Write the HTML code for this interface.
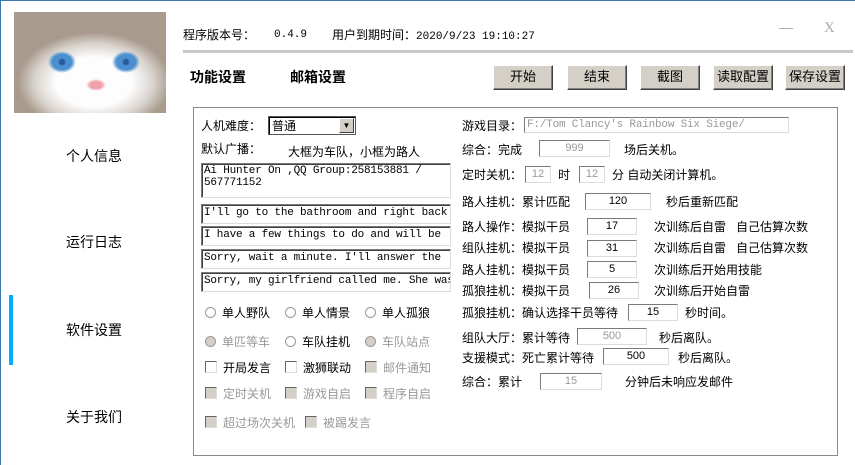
<!DOCTYPE html>
<html><head><meta charset="utf-8"><style>
*{margin:0;padding:0;box-sizing:border-box}
body{width:855px;height:465px;background:#fff;position:relative;overflow:hidden;font:12px "Liberation Sans","Noto Sans CJK SC","WenQuanYi Zen Hei",sans-serif;color:#000}
.a{position:absolute;white-space:nowrap;line-height:14px}
.tb{position:absolute;border:1px solid #dcdcdc;border-top-color:#7a7a7a;border-left-color:#7a7a7a;box-shadow:inset 1px 1px 0 #404040;background:#fff;font:11px "Liberation Mono","Noto Sans CJK SC",monospace;padding:1px 2px;white-space:nowrap;overflow:hidden;line-height:14px;letter-spacing:-0.2px}
.num{position:absolute;border:1px solid #dcdcdc;border-top-color:#7a7a7a;border-left-color:#7a7a7a;background:#fff;text-align:center;font-size:11px;line-height:14px;height:17px}
.dis{color:#999}
.btn{position:absolute;top:65px;height:25px;width:60px;background:#d4d0c8;border:1px solid #fff;border-right-color:#404040;border-bottom-color:#404040;box-shadow:inset -1px -1px 0 #808080;text-align:center;line-height:22px;font-size:13px}
.rad{display:inline-block;width:11px;height:11px;border-radius:50%;border:1px solid #999;vertical-align:-1px;margin-right:6px;background:#fff}
.chk{display:inline-block;width:12px;height:12px;border:1px solid #666;border-right-color:#ddd;border-bottom-color:#ddd;vertical-align:-1px;margin-right:6px;background:#fff}
.chk.d{background:#d4d0c8}
.rad.d{background:#d4d0c8}
.nav{position:absolute;left:66px;font-size:14px}
.m{font-family:"Liberation Mono",monospace;font-size:11px}
</style></head><body>
<div class="a" style="left:0;top:0;width:855px;height:1px;background:#3c78b4"></div>
<div class="a" style="left:0;top:0;width:1px;height:465px;background:#3c78b4"></div>
<div class="a" style="left:14px;top:12px;width:152px;height:101px;background:
radial-gradient(circle 4px at 48px 50px,#2a5a9a 0 60%,transparent),
radial-gradient(circle 4px at 112px 50px,#2a5a9a 0 60%,transparent),
radial-gradient(ellipse 14px 11px at 48px 50px,#4a8fd0 0 70%,transparent 100%),
radial-gradient(ellipse 14px 11px at 112px 50px,#4a8fd0 0 70%,transparent 100%),
radial-gradient(ellipse 10px 6px at 82px 73px,#f0a0a8 0 60%,transparent),
radial-gradient(ellipse 85px 55px at 80px 70px,#fdfdfd 45%,#d8d2cc 70%,#a89a8c 90%),
linear-gradient(#6b6660,#b0a8a0);"></div>
<div class="nav" style="top:146px">个人信息</div>
<div class="nav" style="top:232px">运行日志</div>
<div class="a" style="left:9px;top:295px;width:4px;height:70px;background:#00b0ff"></div>
<div class="nav" style="top:320px">软件设置</div>
<div class="nav" style="top:407px">关于我们</div>
<div class="a" style="left:183px;top:28px">程序版本号：</div>
<div class="a m" style="left:274px;top:28px">0.4.9</div>
<div class="a" style="left:332px;top:28px">用户到期时间：<span class="m">2020/9/23 19:10:27</span></div>
<div class="a" style="left:779px;top:20px;color:#aaa;font-size:14px">—</div>
<div class="a" style="left:824px;top:20px;color:#aaa;font:15px 'Liberation Serif',serif">X</div>
<div class="a" style="left:183px;top:50px;width:670px;height:3px;background:#c8c8c8"></div>
<div class="a" style="left:190px;top:70px;font-size:14px;font-weight:bold">功能设置</div>
<div class="a" style="left:290px;top:70px;font-size:14px;font-weight:bold">邮箱设置</div>
<div class="btn" style="left:493px">开始</div>
<div class="btn" style="left:567px">结束</div>
<div class="btn" style="left:640px">截图</div>
<div class="btn" style="left:713px">读取配置</div>
<div class="btn" style="left:785px">保存设置</div>
<div class="a" style="left:193px;top:107px;width:645px;height:349px;border:1px solid #888"></div>
<div class="a" style="left:201px;top:119px">人机难度：</div>
<div class="a" style="left:268px;top:116px;width:88px;height:19px;border:1px solid #555;box-shadow:inset 1px 1px 0 #000;padding:1px 3px;line-height:16px">普通<span style="position:absolute;right:1px;top:1px;width:15px;height:15px;background:#d4d0c8;border:1px solid #fff;border-right-color:#404040;border-bottom-color:#404040;font-size:8px;text-align:center;line-height:13px">▼</span></div>
<div class="a" style="left:201px;top:142px">默认广播：</div>
<div class="a" style="left:288px;top:145px">大框为车队，小框为路人</div>
<div class="tb" style="left:201px;top:163px;width:250px;height:35px;white-space:normal;line-height:12px">Ai Hunter On ,QQ Group:258153881 / 567771152</div>
<div class="tb" style="left:201px;top:204px;width:250px;height:20px">I'll go to the bathroom and right back</div>
<div class="tb" style="left:201px;top:226px;width:250px;height:20px">I have a few things to do and will be</div>
<div class="tb" style="left:201px;top:249px;width:250px;height:20px">Sorry, wait a minute. I'll answer the</div>
<div class="tb" style="left:201px;top:272px;width:250px;height:20px">Sorry, my girlfriend called me. She was</div>
<div class="a" style="left:205px;top:306px"><span class="rad"></span>单人野队</div>
<div class="a" style="left:285px;top:306px"><span class="rad"></span>单人情景</div>
<div class="a" style="left:365px;top:306px"><span class="rad"></span>单人孤狼</div>
<div class="a dis" style="left:205px;top:335px"><span class="rad d"></span>单匹等车</div>
<div class="a" style="left:285px;top:335px"><span class="rad"></span>车队挂机</div>
<div class="a dis" style="left:365px;top:335px"><span class="rad d"></span>车队站点</div>
<div class="a" style="left:205px;top:361px"><span class="chk"></span>开局发言</div>
<div class="a" style="left:285px;top:361px"><span class="chk"></span>激狮联动</div>
<div class="a dis" style="left:365px;top:361px"><span class="chk d"></span>邮件通知</div>
<div class="a dis" style="left:205px;top:387px"><span class="chk d"></span>定时关机</div>
<div class="a dis" style="left:285px;top:387px"><span class="chk d"></span>游戏自启</div>
<div class="a dis" style="left:365px;top:387px"><span class="chk d"></span>程序自启</div>
<div class="a dis" style="left:205px;top:416px"><span class="chk d"></span>超过场次关机</div>
<div class="a dis" style="left:305px;top:416px"><span class="chk d"></span>被踢发言</div>

<div class="a" style="left:462px;top:119px">游戏目录：</div>
<div class="tb dis" style="left:524px;top:117px;width:265px;height:16px;box-shadow:none;line-height:12px">F:/Tom Clancy's Rainbow Six Siege/</div>
<div class="a" style="left:462px;top:143px">综合：完成</div>
<div class="num dis" style="left:539px;top:140px;width:71px">999</div>
<div class="a" style="left:624px;top:143px">场后关机。</div>
<div class="a" style="left:462px;top:168px">定时关机：</div>
<div class="num dis" style="left:525px;top:166px;width:26px">12</div>
<div class="a" style="left:558px;top:168px">时</div>
<div class="num dis" style="left:579px;top:166px;width:26px">12</div>
<div class="a" style="left:612px;top:168px">分 自动关闭计算机。</div>
<div class="a" style="left:462px;top:195px">路人挂机：累计匹配</div>
<div class="num" style="left:585px;top:193px;width:66px">120</div>
<div class="a" style="left:666px;top:195px">秒后重新匹配</div>
<div class="a" style="left:462px;top:220px">路人操作：模拟干员</div>
<div class="num" style="left:587px;top:218px;width:50px">17</div>
<div class="a" style="left:654px;top:220px">次训练后自雷 &nbsp; 自己估算次数</div>
<div class="a" style="left:462px;top:241px">组队挂机：模拟干员</div>
<div class="num" style="left:587px;top:240px;width:50px">31</div>
<div class="a" style="left:654px;top:241px">次训练后自雷 &nbsp; 自己估算次数</div>
<div class="a" style="left:462px;top:263px">路人挂机：模拟干员</div>
<div class="num" style="left:587px;top:261px;width:50px">5</div>
<div class="a" style="left:654px;top:263px">次训练后开始用技能</div>
<div class="a" style="left:462px;top:284px">孤狼挂机：模拟干员</div>
<div class="num" style="left:589px;top:282px;width:50px">26</div>
<div class="a" style="left:654px;top:284px">次训练后开始自雷</div>
<div class="a" style="left:462px;top:306px">孤狼挂机：确认选择干员等待</div>
<div class="num" style="left:628px;top:304px;width:50px">15</div>
<div class="a" style="left:685px;top:306px">秒时间。</div>
<div class="a" style="left:462px;top:331px">组队大厅：累计等待</div>
<div class="num dis" style="left:577px;top:328px;width:70px">500</div>
<div class="a" style="left:659px;top:331px">秒后离队。</div>
<div class="a" style="left:462px;top:351px">支援模式：死亡累计等待</div>
<div class="num" style="left:603px;top:348px;width:66px">500</div>
<div class="a" style="left:678px;top:351px">秒后离队。</div>
<div class="a" style="left:462px;top:375px">综合：累计</div>
<div class="num dis" style="left:540px;top:373px;width:62px">15</div>
<div class="a" style="left:625px;top:375px">分钟后未响应发邮件</div>
</body></html>
